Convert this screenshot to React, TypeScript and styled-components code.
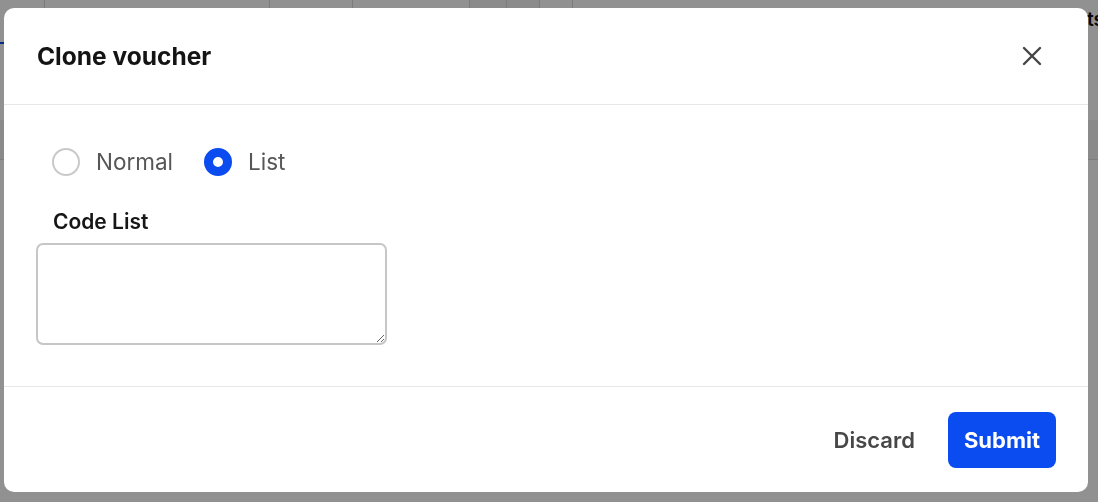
import React, { useState } from 'react';
import styled, { createGlobalStyle } from 'styled-components';

const GlobalStyle = createGlobalStyle`
  * { box-sizing: border-box; }
  html, body { margin: 0; padding: 0; height: 100%; }
  body {
    font-family: Inter, "Noto Sans", "Liberation Sans", sans-serif;
    background: #fff;
    overflow: hidden;
  }
`;

// page behind the dialog
const Page = styled.div`
  display: flex;
  flex-direction: column;
  height: 100vh;
  background: #fff;
`;

const TabStrip = styled.div`
  display: flex;
  height: 44px;
`;

const Tab = styled.div<{ $w: number; $active?: boolean; $hover?: boolean }>`
  width: ${p => p.$w}px;
  flex-shrink: 0;
  border-right: 1px solid #d8d8d8;
  border-bottom: 2px solid ${p => (p.$active ? '#0a4cf0' : 'transparent')};
  background: ${p => (p.$hover ? '#f4f4f4' : '#fff')};
`;

const TabRest = styled.div`
  flex: 1;
  display: flex;
  justify-content: flex-end;
  padding-top: 8px;
  font-size: 19px;
  font-weight: 600;
  color: #111;
  margin-right: -6px;
`;

const TableArea = styled.div`
  display: flex;
  flex-direction: column;
  padding-top: 76px;
`;

const TableRow = styled.div<{ $shade?: boolean }>`
  height: 40px;
  border-bottom: 1px solid #dcdcdc;
  background: ${p => (p.$shade ? '#f2f2f2' : '#fff')};
`;

// dialog
const Backdrop = styled.div`
  position: fixed;
  inset: 0;
  background: rgba(0, 0, 0, 0.43);
  display: flex;
  align-items: flex-start;
  padding: 8px 10px 10px 4px;
`;

const Dialog = styled.div`
  width: 100%;
  background: #fff;
  border-radius: 10px;
  display: flex;
  flex-direction: column;
  overflow: hidden;
`;

const Header = styled.div`
  height: 97px;
  display: flex;
  align-items: center;
  justify-content: space-between;
  padding: 0 38px 0 33px;
  border-bottom: 1px solid #e7e7e7;
`;

const Title = styled.h2`
  margin: 0;
  font-size: 24.5px;
  font-weight: 700;
  letter-spacing: 0;
  color: #141414;
`;

const CloseButton = styled.button`
  width: 36px;
  height: 36px;
  border: none;
  background: none;
  padding: 0;
  display: flex;
  align-items: center;
  justify-content: center;
  cursor: pointer;
`;

const Body = styled.div`
  display: flex;
  flex-direction: column;
  align-items: flex-start;
  padding: 43px 32px 41px;
`;

const RadioGroup = styled.div`
  display: flex;
  gap: 31px;
  padding-left: 16px;
  height: 28px;
`;

const RadioOption = styled.label`
  display: flex;
  align-items: center;
  gap: 16px;
  cursor: pointer;
  font-size: 22.5px;
  color: #575757;
  line-height: 28px;
`;

const RadioDot = styled.span<{ $checked: boolean }>`
  width: 28px;
  height: 28px;
  border-radius: 50%;
  flex-shrink: 0;
  border: ${p => (p.$checked ? '9px solid #0a4cf0' : '2px solid #c9c9c9')};
  background: #fff;
`;

const FieldLabel = styled.div`
  margin-top: 32px;
  padding-left: 17px;
  height: 28px;
  line-height: 28px;
  font-size: 21px;
  font-weight: 600;
  color: #161616;
`;

const CodeInput = styled.textarea`
  margin-top: 7px;
  width: 351px;
  height: 102px;
  border: 2px solid #c6c6c6;
  border-radius: 7px;
  font-family: inherit;
  font-size: 18px;
  padding: 8px 12px;
  outline: none;
`;

const Footer = styled.div`
  border-top: 1px solid #e7e7e7;
  display: flex;
  justify-content: flex-end;
  align-items: center;
  gap: 17px;
  padding: 25px 32px 24px;
`;

const Button = styled.button<{ $primary?: boolean }>`
  height: 56px;
  padding: 0 16px;
  border: none;
  border-radius: 8px;
  font-family: inherit;
  font-size: 22px;
  font-weight: ${p => (p.$primary ? 700 : 600)};
  color: ${p => (p.$primary ? '#fff' : '#474747')};
  background: ${p => (p.$primary ? '#0a4cf0' : 'transparent')};
  cursor: pointer;
`;

const CloseIcon = () => (
  <svg width="20" height="20" viewBox="0 0 20 20">
    <path d="M2 2 L18 18 M18 2 L2 18" stroke="#454545" strokeWidth="2.4" strokeLinecap="round" />
  </svg>
);

const tabs = [
  { w: 45, active: true },
  { w: 225 },
  { w: 83 },
  { w: 117 },
  { w: 37, hover: true },
  { w: 33, hover: true },
  { w: 33 },
];

export default function App() {
  const [mode, setMode] = useState<'normal' | 'list'>('list');
  const [codes, setCodes] = useState('');

  return (
    <>
      <GlobalStyle />
      <Page>
        <TabStrip>
          {tabs.map((t, i) => (
            <Tab key={i} $w={t.w} $active={t.active} $hover={t.hover} />
          ))}
          <TabRest>Products</TabRest>
        </TabStrip>
        <TableArea>
          <TableRow $shade />
        </TableArea>
      </Page>

      <Backdrop>
        <Dialog>
          <Header>
            <Title>Clone voucher</Title>
            <CloseButton aria-label="Close">
              <CloseIcon />
            </CloseButton>
          </Header>

          <Body>
            <RadioGroup>
              <RadioOption onClick={() => setMode('normal')}>
                <RadioDot $checked={mode === 'normal'} />
                Normal
              </RadioOption>
              <RadioOption onClick={() => setMode('list')}>
                <RadioDot $checked={mode === 'list'} />
                List
              </RadioOption>
            </RadioGroup>
            <FieldLabel>Code List</FieldLabel>
            <CodeInput value={codes} onChange={e => setCodes(e.target.value)} />
          </Body>

          <Footer>
            <Button>Discard</Button>
            <Button $primary>Submit</Button>
          </Footer>
        </Dialog>
      </Backdrop>
    </>
  );
}
